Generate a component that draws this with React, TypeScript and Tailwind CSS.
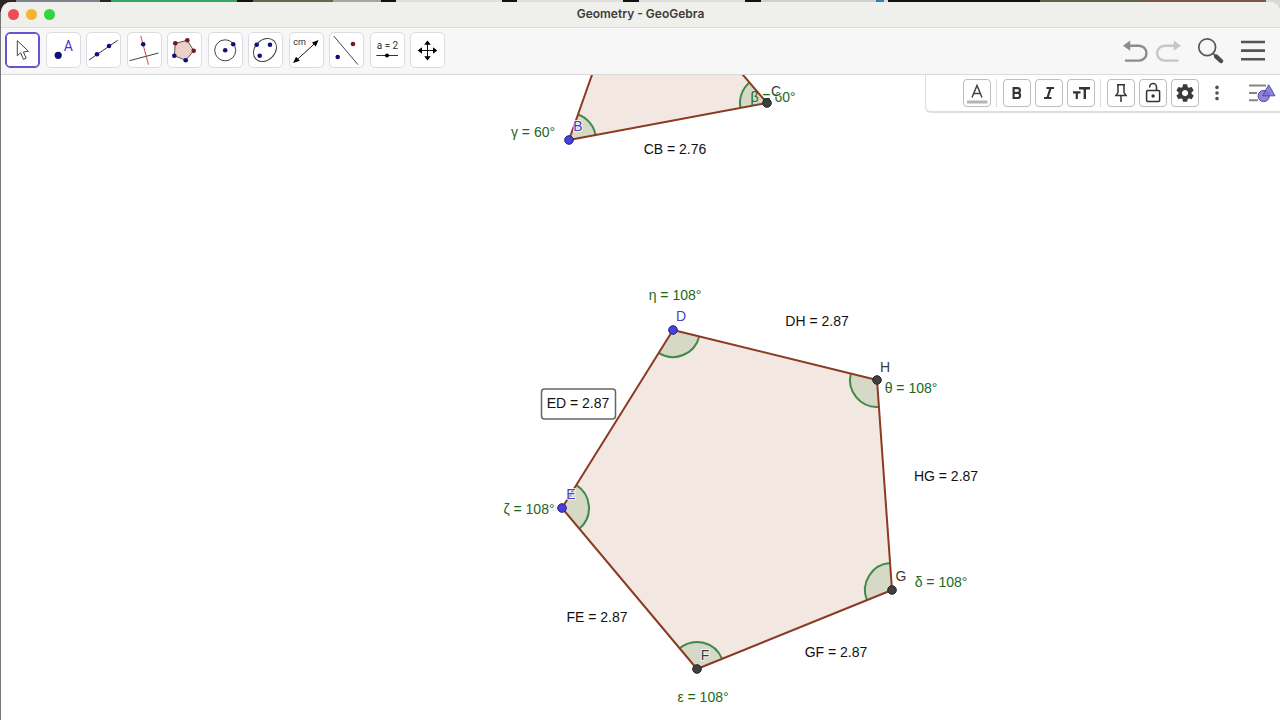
import type { ReactNode } from "react";

type Pt = [number, number];

const NAVY = "#10107a";
const MAROON = "#7d1420";

const Dot = ({ x, y, r = 2.3, c = NAVY }: { x: number; y: number; r?: number; c?: string }) => (
  <circle cx={x} cy={y} r={r} fill={c} />
);

const tools: { name: string; icon: ReactNode }[] = [
  {
    name: "Move",
    icon: (
      <path
        d="M12.3 8.7V23.7L15.7 20.7L18.4 27.4L21.2 26.1L18.4 20L23.4 19.2Z"
        fill="#fff"
        stroke="#444"
        strokeWidth="1"
      />
    ),
  },
  {
    name: "Point",
    icon: (
      <>
        <Dot x={12.2} y={23.3} r={3.6} />
        <text x="22.2" y="19" textAnchor="middle" fontSize="14" fill="#4438c8">
          A
        </text>
      </>
    ),
  },
  {
    name: "Line",
    icon: (
      <>
        <path d="M3 28L31.7 8.3" stroke="#333" />
        <Dot x={11} y={22.3} />
        <Dot x={23} y={14} />
      </>
    ),
  },
  {
    name: "Perpendicular Line",
    icon: (
      <>
        <path d="M2.5 28.7L31.5 21" stroke="#444" />
        <path d="M13.8 4L21.5 32.7" stroke="#cc4a4a" />
        <Dot x={16.2} y={12.3} />
      </>
    ),
  },
  {
    name: "Polygon",
    icon: (
      <>
        <path d="M8.3 11.3L20.3 8.3L26.7 18.7L18.7 28.3L7.3 23.7Z" fill="#ecd0c8" stroke="#555" />
        <Dot x={8.3} y={11.3} c={MAROON} />
        <Dot x={20.3} y={8.3} c={MAROON} />
        <Dot x={26.7} y={18.7} c={MAROON} />
        <Dot x={18.7} y={28.3} />
        <Dot x={7.3} y={23.7} />
      </>
    ),
  },
  {
    name: "Circle with Center",
    icon: (
      <>
        <circle cx="17.2" cy="18.3" r="10.5" fill="none" stroke="#444" />
        <Dot x={17.2} y={18.3} />
        <Dot x={25.2} y={12.3} />
      </>
    ),
  },
  {
    name: "Ellipse",
    icon: (
      <>
        <ellipse
          cx="17"
          cy="18"
          rx="12.8"
          ry="10"
          transform="rotate(-45 17 18)"
          fill="none"
          stroke="#444"
        />
        <Dot x={8.7} y={12.7} />
        <Dot x={22} y={12.7} />
        <Dot x={11.7} y={23.7} />
      </>
    ),
  },
  {
    name: "Distance",
    icon: (
      <>
        <text x="10.5" y="13" textAnchor="middle" fontSize="9" fill="#333">
          cm
        </text>
        <path d="M7 28.6L27 10.4" stroke="#222" />
        <path d="M29.6 8L26.8 14.4L23 10.4Z M4.1 31.1L7 24.7L10.8 28.7Z" fill="#000" />
      </>
    ),
  },
  {
    name: "Reflect",
    icon: (
      <>
        <path d="M4.7 4L29 32.7" stroke="#444" />
        <Dot x={24} y={12} c={MAROON} />
        <Dot x={8.7} y={25} />
      </>
    ),
  },
  {
    name: "Slider",
    icon: (
      <>
        <text x="17.5" y="17" textAnchor="middle" fontSize="10" fill="#333">
          a = 2
        </text>
        <path d="M6.3 23.5H28" stroke="#333" />
        <Dot x={17} y={23.5} r={2.1} c="#000" />
      </>
    ),
  },
  {
    name: "Move Graphics View",
    icon: (
      <>
        <path d="M10 18.5H25M17.5 11V26.5" stroke="#111" />
        <path
          d="M17.5 8.5L20.8 12.8H14.2Z M17.5 28.5L20.8 24.2H14.2Z M7.7 18.5L12 15.2V21.8Z M27.3 18.5L23 15.2V21.8Z"
          fill="#000"
        />
      </>
    ),
  },
];

const desktop = [
  "w-4 bg-[#2b2724]",
  "w-[84px] bg-[#7d8490]",
  "w-[11px] bg-[#2b2320]",
  "w-[126px] bg-[#35a560]",
  "w-4 bg-[#14100e]",
  "w-20 bg-[#66664a]",
  "w-12 bg-[#a6a6a0]",
  "w-[15px] bg-[#111]",
  "w-[106px] bg-[#dededd]",
  "w-[15px] bg-[#111]",
  "w-[106px] bg-[#dededd]",
  "w-4 bg-[#111]",
  "w-[106px] bg-[#dededd]",
  "w-4 bg-[#111]",
  "w-[115px] bg-[#cfcfcf]",
  "w-2 bg-[#2a86a8]",
  "w-1 bg-[#dddddd]",
  "w-[152px] bg-[#121212]",
  "w-[100px] bg-[#5d6249]",
  "w-[126px] bg-[#7b5545]",
  "grow bg-[#d8d8d4]",
];

const D: Pt = [673, 330];
const H: Pt = [877, 380];
const G: Pt = [892, 590];
const F: Pt = [697, 669];
const E: Pt = [562, 508];
const B: Pt = [569, 140];
const C: Pt = [767, 103];
const A: Pt = [636, -50];

const toPoints = (pts: Pt[]) => pts.map((p) => p.join(",")).join(" ");

function Angle({ at, from, to, r = 27 }: { at: Pt; from: Pt; to: Pt; r?: number }) {
  const on = (p: Pt): Pt => {
    const l = Math.hypot(p[0] - at[0], p[1] - at[1]);
    return [at[0] + ((p[0] - at[0]) * r) / l, at[1] + ((p[1] - at[1]) * r) / l];
  };
  const s = on(from);
  const e = on(to);
  const arc = `M${s[0]} ${s[1]}A${r} ${r} 0 0 1 ${e[0]} ${e[1]}`;
  return (
    <>
      <path d={`${arc}L${at[0]} ${at[1]}Z`} fill="#d5d9c5" />
      <path d={arc} fill="none" stroke="#3f8a4b" strokeWidth="2" />
    </>
  );
}

const shapes: Pt[][] = [
  [A, C, B],
  [D, H, G, F, E],
];

const points: { p: Pt; label: string; at: Pt; free?: boolean }[] = [
  { p: B, label: "B", at: [578, 131], free: true },
  { p: C, label: "C", at: [776, 96] },
  { p: D, label: "D", at: [681, 321], free: true },
  { p: E, label: "E", at: [571, 499], free: true },
  { p: F, label: "F", at: [705, 660] },
  { p: G, label: "G", at: [901, 581] },
  { p: H, label: "H", at: [885, 372] },
];

const angleLabels: { text: string; at: Pt }[] = [
  { text: "γ = 60°", at: [533, 137] },
  { text: "β = 60°", at: [773, 102] },
  { text: "η = 108°", at: [675, 300] },
  { text: "θ = 108°", at: [911, 393] },
  { text: "δ = 108°", at: [941, 587] },
  { text: "ε = 108°", at: [703, 702] },
  { text: "ζ = 108°", at: [529, 514] },
];

const lengthLabels: { text: string; at: Pt }[] = [
  { text: "CB = 2.76", at: [675, 154] },
  { text: "DH = 2.87", at: [817, 326] },
  { text: "HG = 2.87", at: [946, 481] },
  { text: "GF = 2.87", at: [836, 657] },
  { text: "FE = 2.87", at: [597, 622] },
  { text: "ED = 2.87", at: [578, 408] },
];

function Construction() {
  return (
    <svg className="absolute inset-0 h-full w-full font-['Liberation_Sans',sans-serif]" fontSize="14">
      <g transform="translate(0 -75)">
        {shapes.map((s, i) => (
          <polygon key={i} points={toPoints(s)} fill="#f2e7e1" />
        ))}
        <Angle at={B} from={A} to={C} />
        <Angle at={C} from={B} to={A} />
        <Angle at={D} from={H} to={E} />
        <Angle at={H} from={G} to={D} />
        <Angle at={G} from={F} to={H} />
        <Angle at={F} from={E} to={G} />
        <Angle at={E} from={D} to={F} />
        {shapes.map((s, i) => (
          <polygon
            key={i}
            points={toPoints(s)}
            fill="none"
            stroke="#8b3a24"
            strokeWidth="2"
            strokeLinejoin="round"
          />
        ))}
        <rect x="541.5" y="389" width="74" height="30" rx="3" fill="#fff" stroke="#666" strokeWidth="1.5" />
        <g textAnchor="middle">
          {angleLabels.map((l) => (
            <text key={l.text} x={l.at[0]} y={l.at[1]} fill="#1c681c">
              {l.text}
            </text>
          ))}
          {lengthLabels.map((l) => (
            <text key={l.text} x={l.at[0]} y={l.at[1]} fill="#111">
              {l.text}
            </text>
          ))}
          {points.map(({ p, label, at, free }) => (
            <g key={label}>
              <circle
                cx={p[0]}
                cy={p[1]}
                r="4.3"
                fill={free ? "#4a40e0" : "#404040"}
                stroke={free ? "#23207a" : "#222"}
              />
              <text
                x={at[0]}
                y={at[1]}
                fill={free ? "#4a3fcb" : "#3a3a3a"}
                stroke="#fff"
                strokeWidth="2"
                strokeOpacity="0.8"
                paintOrder="stroke"
              >
                {label}
              </text>
            </g>
          ))}
        </g>
      </g>
    </svg>
  );
}

function StyleButton({ name, children }: { name: string; children: ReactNode }) {
  return (
    <button
      aria-label={name}
      className="flex size-7 items-center justify-center rounded border border-[#bdbdbd] bg-white"
    >
      <svg width="26" height="26" viewBox="0 0 26 26" fill="none">
        {children}
      </svg>
    </button>
  );
}

const Divider = () => <div className="mr-0.5 ml-px h-7 w-px bg-[#dcdcdc]" />;

function StyleBar() {
  return (
    <div className="relative ml-auto flex h-[38px] w-[355px] items-center gap-1 rounded-bl-md border-b-2 border-l border-[#dedede] bg-white pl-[37px]">
      <StyleButton name="Text color">
        <path d="M8 17.5L13 5.5L18 17.5M9.8 13.5H16.2" stroke="#444" strokeWidth="1.5" />
        <path d="M3 22H23.5" stroke="#b5b5b5" strokeWidth="3" />
      </StyleButton>
      <Divider />
      <StyleButton name="Bold">
        <path
          d="M9.6 8.1H13.5A2.4 2.4 0 0 1 13.5 12.9H9.6ZM9.6 12.9H14A2.6 2.6 0 0 1 14 18H9.6Z"
          stroke="#333"
          strokeWidth="2.1"
        />
      </StyleButton>
      <StyleButton name="Italic">
        <path d="M10.5 8H18M8 18H15.5M14.6 8L11.4 18" stroke="#333" strokeWidth="2.2" />
      </StyleButton>
      <StyleButton name="Text size">
        <path d="M11 8.2H22M16.8 8.2V19" stroke="#333" strokeWidth="2.4" />
        <path d="M5 12.4H12.5M8.8 12.4V19" stroke="#333" strokeWidth="2.2" />
      </StyleButton>
      <Divider />
      <StyleButton name="Pin">
        <path d="M9 4.7H17M10 5V12.6L8 15.4H18L16 12.6V5M13 15.5V22" stroke="#333" strokeWidth="1.5" />
      </StyleButton>
      <StyleButton name="Unlock">
        <rect x="6.6" y="10.6" width="13" height="11" rx="1" stroke="#333" strokeWidth="1.5" />
        <path d="M9.7 7.5V7A3.4 3.4 0 0 1 16.5 7V10.5" stroke="#333" strokeWidth="1.5" />
        <circle cx="13.1" cy="16" r="1.7" fill="#333" />
      </StyleButton>
      <StyleButton name="Settings">
        <g transform="translate(2.5 2.5) scale(0.88)">
          <path
            fill="#3a3a3a"
            d="M19.43 12.98c.04-.32.07-.64.07-.98s-.03-.66-.07-.98l2.11-1.65c.19-.15.24-.42.12-.64l-2-3.46c-.12-.22-.39-.3-.61-.22l-2.49 1c-.52-.4-1.08-.73-1.69-.98l-.38-2.65C14.46 2.18 14.25 2 14 2h-4c-.25 0-.46.18-.49.42l-.38 2.65c-.61.25-1.17.59-1.69.98l-2.49-1c-.23-.09-.49 0-.61.22l-2 3.46c-.13.22-.07.49.12.64l2.11 1.65c-.04.32-.07.65-.07.98s.03.66.07.98l-2.11 1.65c-.19.15-.24.42-.12.64l2 3.46c.12.22.39.3.61.22l2.49-1c.52.4 1.08.73 1.69.98l.38 2.65c.03.24.24.42.49.42h4c.25 0 .46-.18.49-.42l.38-2.65c.61-.25 1.17-.59 1.69-.98l2.49 1c.23.09.49 0 .61-.22l2-3.46c.12-.22.07-.49-.12-.64l-2.11-1.65zM12 15.5c-1.93 0-3.5-1.57-3.5-3.5s1.57-3.5 3.5-3.5 3.5 1.57 3.5 3.5-1.57 3.5-3.5 3.5z"
          />
        </g>
      </StyleButton>
      <button aria-label="More" className="flex size-7 items-center justify-center">
        <svg width="6" height="18" viewBox="0 0 6 18" fill="#505050">
          <circle cx="3" cy="3.4" r="1.8" />
          <circle cx="3" cy="9" r="1.8" />
          <circle cx="3" cy="14.6" r="1.8" />
        </svg>
      </button>
      <button aria-label="Toggle style bar" className="mr-1 ml-auto">
        <svg width="28" height="22" viewBox="0 0 28 22" fill="none">
          <path d="M1 3.5H18M1 11H9M1 18.3H10" stroke="#858585" strokeWidth="2" />
          <circle cx="15.7" cy="14" r="5.6" fill="#8f84ea" stroke="#4f4a78" />
          <path d="M20.7 2.8L27 13.8H14.6Z" fill="#7a70dc" fillOpacity="0.85" stroke="#57528a" />
        </svg>
      </button>
    </div>
  );
}

export default function App() {
  return (
    <div className="relative flex min-h-screen flex-col bg-[#777] font-['Liberation_Sans',sans-serif]">
      <div className="absolute inset-x-0 top-0 flex h-3" aria-hidden="true">
        {desktop.map((c, i) => (
          <div key={i} className={c} />
        ))}
      </div>
      <div className="relative mt-[2px] ml-px flex grow flex-col overflow-hidden rounded-t-[10px] bg-white">
        <header className="relative flex h-[26px] items-center border-b border-[#dcdcda] bg-[#efefeb] px-[7px]">
          <div className="flex gap-[7px]">
            <button aria-label="Close" className="size-[11px] rounded-full bg-[#ed4b55]" />
            <button aria-label="Minimize" className="size-[11px] rounded-full bg-[#f5b435]" />
            <button aria-label="Zoom" className="size-[11px] rounded-full bg-[#32d446]" />
          </div>
          <h1 className="absolute inset-x-0 top-1 text-center font-[Inter,sans-serif] text-xs font-semibold text-[#3c3c3c]">
            Geometry - GeoGebra
          </h1>
        </header>

        <div className="flex h-[47px] items-start justify-between border-b border-[#dadada] bg-[#f7f7f7] pt-1 pr-[13px] pl-1">
          <div className="flex w-[440px] justify-between">
            {tools.map((t, i) => (
              <button
                key={t.name}
                aria-label={t.name}
                className={
                  i === 0
                    ? "h-9 w-[35px] rounded-[5px] border border-[#6355cc] bg-white shadow-[inset_0_0_0_1px_#6355cc]"
                    : "h-9 w-[35px] rounded-[5px] border border-[#dcdce0] bg-white"
                }
              >
                <svg width="33" height="34" viewBox="1 1 33 34" className="font-[Roboto,sans-serif]">
                  {t.icon}
                </svg>
              </button>
            ))}
          </div>
          <div className="flex h-9 items-center">
            <button aria-label="Undo" className="mr-1.5">
              <svg width="28" height="28" viewBox="0 0 28 28" fill="none">
                <path d="M7 9.7H18A7.4 7.4 0 0 1 18 24.6H4" stroke="#8c8c8c" strokeWidth="2.4" />
                <path d="M2 9.7L9.2 4.6V14.8Z" fill="#8c8c8c" />
              </svg>
            </button>
            <button aria-label="Redo" className="mr-3.5">
              <svg width="28" height="28" viewBox="0 0 28 28" fill="none">
                <path d="M20 9.7H9.6A7.4 7.4 0 0 0 9.6 24.6H23.5" stroke="#c6c6c6" strokeWidth="2.4" />
                <path d="M26 9.7L18.8 4.6V14.8Z" fill="#c6c6c6" />
              </svg>
            </button>
            <button aria-label="Search" className="mr-4">
              <svg width="28" height="28" viewBox="0 0 28 28" fill="none">
                <circle cx="10.2" cy="11.2" r="8.4" stroke="#585858" strokeWidth="1.7" />
                <path d="M16 17.4L19 20.4" stroke="#585858" strokeWidth="2" />
                <path d="M19.3 20.7L24 25" stroke="#4c4c4c" strokeWidth="4.4" strokeLinecap="round" />
              </svg>
            </button>
            <button aria-label="Menu" className="mr-0.5">
              <svg width="24" height="24" viewBox="0 0 24 24" fill="none">
                <path d="M0 4H24M0 12.6H24M0 21.3H24" stroke="#555" strokeWidth="2.6" />
              </svg>
            </button>
          </div>
        </div>

        <main className="relative grow overflow-hidden bg-white">
          <div className="absolute inset-0 -left-px">
            <Construction />
          </div>
          <StyleBar />
        </main>
      </div>
    </div>
  );
}
